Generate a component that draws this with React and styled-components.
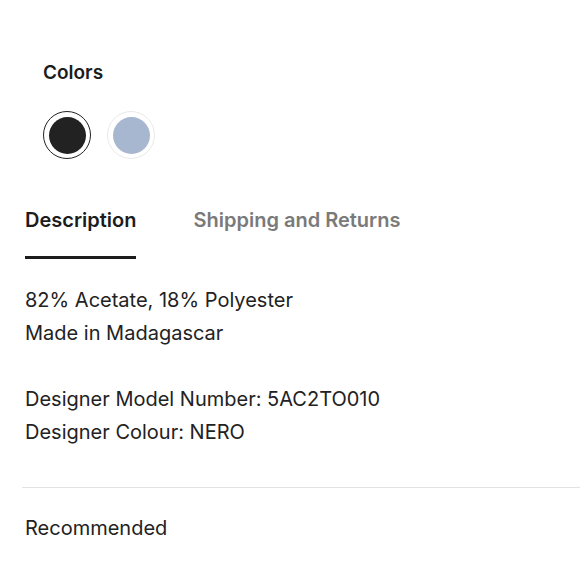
import React from "react";
import styled, { createGlobalStyle } from "styled-components";

const Global = createGlobalStyle`
  html, body { margin: 0; padding: 0; background: #fff; }
  body { font-family: Inter, "Noto Sans", sans-serif; color: #222; }
`;

const Page = styled.div`
  padding: 0 0 0 25px;
  width: 555px;
  overflow: hidden;
`;

const ColorsSection = styled.section`
  padding: 61px 0 0 18px;
`;

const Heading = styled.h3`
  margin: 0;
  font-size: 19px;
  font-weight: 600;
  line-height: 24px;
  color: #1c1c1c;
`;

const Swatches = styled.div`
  display: flex;
  gap: 16px;
  margin-top: 26px;
`;

const Swatch = styled.button`
  width: 48px;
  height: 48px;
  border-radius: 50%;
  border: 1px solid ${(p) => (p.$active ? "#222" : "#eaeaea")};
  background: #fff;
  padding: 0;
  display: flex;
  align-items: center;
  justify-content: center;
  cursor: pointer;
`;

const Dot = styled.span`
  width: 37px;
  height: 37px;
  border-radius: 50%;
  background: ${(p) => p.$color};
`;

const Tabs = styled.div`
  display: flex;
  gap: 57px;
  margin-top: 47px;
`;

const Tab = styled.button`
  background: none;
  border: none;
  padding: 0 0 22px;
  font-family: inherit;
  font-size: 20px;
  font-weight: 600;
  line-height: 28px;
  color: ${(p) => (p.$active ? "#1c1c1c" : "#7a7a7a")};
  border-bottom: 3px solid ${(p) => (p.$active ? "#1c1c1c" : "transparent")};
  cursor: pointer;
`;

const Body = styled.div`
  margin-top: 25px;
  font-size: 20px;
  line-height: 33px;
  color: #222;
`;

const Line = styled.p`
  margin: 0;
  min-height: 33px;
`;

const Divider = styled.hr`
  border: none;
  border-top: 1px solid #e2e2e2;
  margin: 38px -20px 0 -3px;
`;

const Recommended = styled.h4`
  margin: 26px 0 0;
  font-size: 20px;
  font-weight: 400;
  line-height: 28px;
  color: #222;
`;

export default function App() {
  return (
    <>
      <Global />
      <Page>
        <ColorsSection>
          <Heading>Colors</Heading>
          <Swatches>
            <Swatch $active><Dot $color="#222222" /></Swatch>
            <Swatch><Dot $color="#a7b7cf" /></Swatch>
          </Swatches>
        </ColorsSection>
        <Tabs>
          <Tab $active>Description</Tab>
          <Tab>Shipping and Returns</Tab>
        </Tabs>
        <Body>
          <Line>82% Acetate, 18% Polyester</Line>
          <Line>Made in Madagascar</Line>
          <Line />
          <Line>Designer Model Number: 5AC2TO010</Line>
          <Line>Designer Colour: NERO</Line>
        </Body>
        <Divider />
        <Recommended>Recommended</Recommended>
      </Page>
    </>
  );
}
